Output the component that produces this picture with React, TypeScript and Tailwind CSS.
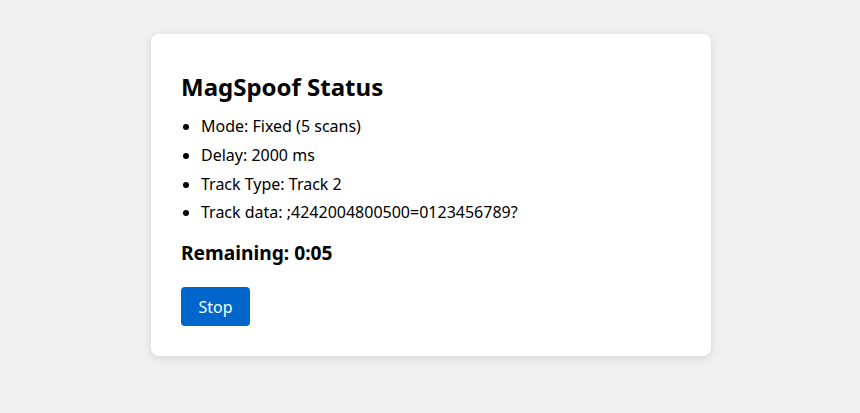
import React from "react";

export default function App() {
  const items = [
    "Mode: Fixed (5 scans)",
    "Delay: 2000 ms",
    "Track Type: Track 2",
    "Track data: ;4242004800500=0123456789?",
  ];
  return (
    <div className="min-h-[413px] w-full bg-[#f0f0f0] pt-[34px] pl-[2px]" style={{ fontFamily: '"Noto Sans", sans-serif' }}>
      <div className="mx-auto w-[560px] rounded-lg bg-white px-[30px] pt-[30px] pb-[30px] shadow-[0_2px_8px_rgba(0,0,0,0.12)] text-black">
        <h2 className="mt-[7px] text-[24px] leading-[32px] font-bold">MagSpoof Status</h2>
        <ul className="mt-[9px] list-disc pl-[20px] text-[16px] leading-[28.8px]">
          {items.map((t) => (
            <li key={t}>{t}</li>
          ))}
        </ul>
        <div className="mt-[12px] text-[19.2px] leading-[28px] font-bold">Remaining: 0:05</div>
        <button className="mt-[20px] h-[39px] w-[69px] rounded-[4px] bg-[#0066cc] text-[16px] text-white">Stop</button>
      </div>
    </div>
  );
}
